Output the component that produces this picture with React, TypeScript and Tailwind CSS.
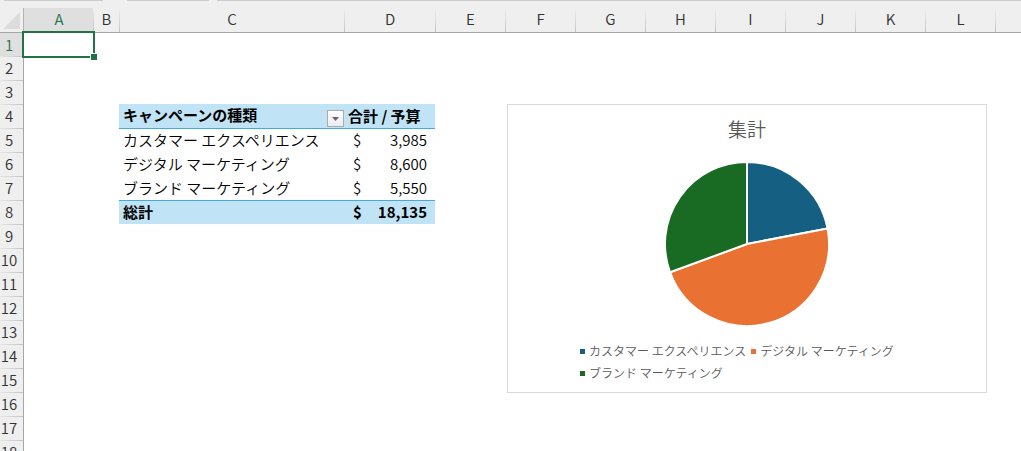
import React from 'react';

const letters = ['A', 'B', 'C', 'D', 'E', 'F', 'G', 'H', 'I', 'J', 'K', 'L', ''];
const columnWidths = ['w-[69px]', 'w-[26px]', 'w-[225px]', 'w-[91px]', 'w-[70px]', 'w-[70px]', 'w-[70px]', 'w-[70px]', 'w-[70px]', 'w-[70px]', 'w-[70px]', 'w-[70px]', ''];
const rows = Array.from({ length: 18 }, (_, i) => i + 1);

type Campaign = { name: string; budget: number; color: string; swatch: string };

const campaigns: Campaign[] = [
  { name: 'カスタマー エクスペリエンス', budget: 3985, color: '#156082', swatch: 'bg-[#156082]' },
  { name: 'デジタル マーケティング', budget: 8600, color: '#e97132', swatch: 'bg-[#e97132]' },
  { name: 'ブランド マーケティング', budget: 5550, color: '#196b24', swatch: 'bg-[#196b24]' },
];
const total = campaigns.reduce((sum, c) => sum + c.budget, 0);

function Money({ value }: { value: number }) {
  return (
    <div className="flex justify-between pr-2 pl-[9px]">
      <span>$</span>
      <span>{value.toLocaleString('en-US')}</span>
    </div>
  );
}

function Selection() {
  return (
    <div className="pointer-events-none absolute -inset-0.5 z-10 border-2 border-[#217346]">
      <span className="absolute -right-1 -bottom-1 size-[7px] border-t border-l border-white bg-[#217346]" />
    </div>
  );
}

function FilterHeader() {
  return (
    <div className="flex h-[23px] items-end justify-between">
      <span className="pl-1 leading-6">キャンペーンの種類</span>
      <button
        type="button"
        aria-label="キャンペーンの種類 フィルター"
        className="flex size-[17px] shrink-0 items-center justify-center border border-[#ababab] bg-linear-to-b from-white to-[#ececf0]"
      >
        <svg className="h-1 w-[7px]" viewBox="0 0 7 4" fill="#666">
          <path d="M0 0h7L3.5 4z" />
        </svg>
      </button>
    </div>
  );
}

function cellContent(row: number, column: string): React.ReactNode {
  const campaign = campaigns[row - 5];
  if (row === 1 && column === 'A') return <Selection />;
  if (row === 4 && column === 'C') return <FilterHeader />;
  if (row === 4 && column === 'D') return <span className="pl-1">合計 / 予算</span>;
  if (campaign && column === 'C') return <span className="pl-1">{campaign.name}</span>;
  if (campaign && column === 'D') return <Money value={campaign.budget} />;
  if (row === 8 && column === 'C') return <span className="pl-1">総計</span>;
  if (row === 8 && column === 'D') return <Money value={total} />;
  return null;
}

function cellStyle(row: number, column: string) {
  if (row === 1 && column === 'A') return 'relative';
  if (column !== 'C' && column !== 'D') return '';
  if (row === 4) return 'bg-[#c0e4f5] font-bold';
  if (row === 5) return 'border-t border-[#44a9dd] leading-[21px]';
  if (row === 8) return 'border-t border-[#44a9dd] bg-[#c0e4f5] font-bold leading-[21px]';
  return '';
}

function Sheet() {
  return (
    <table className="w-full table-fixed border-separate border-spacing-0 text-[15px] leading-6 text-black">
      <colgroup>
        <col className="w-6" />
        {columnWidths.map((width, i) => (
          <col key={i} className={width} />
        ))}
      </colgroup>
      <thead>
        <tr className="h-[25px] bg-[#efefef] leading-[22px] text-[#333]">
          <th className="border-r border-b border-[#a6a6a6] border-r-[#b4b4b4] p-0">
            <button type="button" aria-label="すべて選択" className="flex h-6 w-full items-center justify-end pr-[3px]">
              <svg className="size-[17px]" viewBox="0 0 17 17" fill="#dcdcdc">
                <path d="M17 0v17H0z" />
              </svg>
            </button>
          </th>
          {letters.map((l, i) => (
            <th
              key={i}
              scope="col"
              className={
                l === 'A'
                  ? 'border-b border-[#a6a6a6] bg-[#dfdfdf] p-0 pl-px align-top font-[350] text-[#217346]'
                  : 'border-b border-[#a6a6a6] bg-[linear-gradient(to_bottom,#efefef,#c4c4c4)] bg-[length:1px_100%] bg-left bg-no-repeat p-0 pl-px align-top font-[350]'
              }
            >
              {l}
            </th>
          ))}
        </tr>
      </thead>
      <tbody>
        {rows.map((r) => (
          <tr key={r} className={r === 1 ? 'h-[23px] leading-[23px]' : 'h-6'}>
            <th
              scope="row"
              className={
                r === 1
                  ? 'border-r border-[#a6a6a6] bg-[#dfdfdf] p-0 pr-[5px] font-[350] text-[#217346]'
                  : 'border-r border-[#a6a6a6] bg-[#efefef] bg-[linear-gradient(to_right,#e6e6e6,#c4c4c4)] bg-[length:100%_1px] bg-top bg-no-repeat p-0 pr-[5px] font-[350] text-[#333]'
              }
            >
              {r}
            </th>
            {letters.map((l, i) => (
              <td key={i} className={`p-0 align-top whitespace-nowrap ${cellStyle(r, l)}`}>
                {cellContent(r, l)}
              </td>
            ))}
          </tr>
        ))}
      </tbody>
    </table>
  );
}

function PieChart() {
  const radius = 82;
  let start = 0;
  const slices = campaigns.map((c) => {
    const end = start + (c.budget / total) * Math.PI * 2;
    const point = (a: number) => `${radius * Math.sin(a)} ${-radius * Math.cos(a)}`;
    const d = `M0 0L${point(start)}A${radius} ${radius} 0 ${end - start > Math.PI ? 1 : 0} 1 ${point(end)}Z`;
    start = end;
    return <path key={c.name} d={d} fill={c.color} stroke="#fff" strokeWidth="2" strokeLinejoin="round" />;
  });
  return (
    <svg className="size-[166px]" viewBox="-83 -83 166 166" role="img" aria-label="集計">
      {slices}
    </svg>
  );
}

function ChartCard() {
  return (
    <section className="absolute top-[104px] left-[507px] flex w-[480px] flex-col items-center border border-[#d9d9d9] bg-white pt-[10px] pb-2 text-[#595959]">
      <h2 className="text-[19px] leading-7 font-[350]">集計</h2>
      <div className="mt-[18px]">
        <PieChart />
      </div>
      <ul className="mt-[13px] flex w-[334px] flex-wrap gap-x-[5px] text-[12px] leading-[22px] font-[350]">
        {campaigns.map((c) => (
          <li key={c.name} className="flex items-center gap-1">
            <span className={`size-[5px] ${c.swatch}`} />
            {c.name}
          </li>
        ))}
      </ul>
    </section>
  );
}

export default function App() {
  return (
    <main className="relative h-screen overflow-hidden bg-white font-['Noto_Sans_CJK_JP',sans-serif] font-[350]">
      <div className="flex h-2 items-start bg-[#efefef]">
        <div className="ml-1 h-px w-[99px] bg-[#cdcdcd]" />
        <div className="ml-6 h-px w-[82px] bg-[#cdcdcd]" />
        <div className="ml-2 h-px flex-1 bg-[#cdcdcd]" />
      </div>
      <Sheet />
      <ChartCard />
    </main>
  );
}
